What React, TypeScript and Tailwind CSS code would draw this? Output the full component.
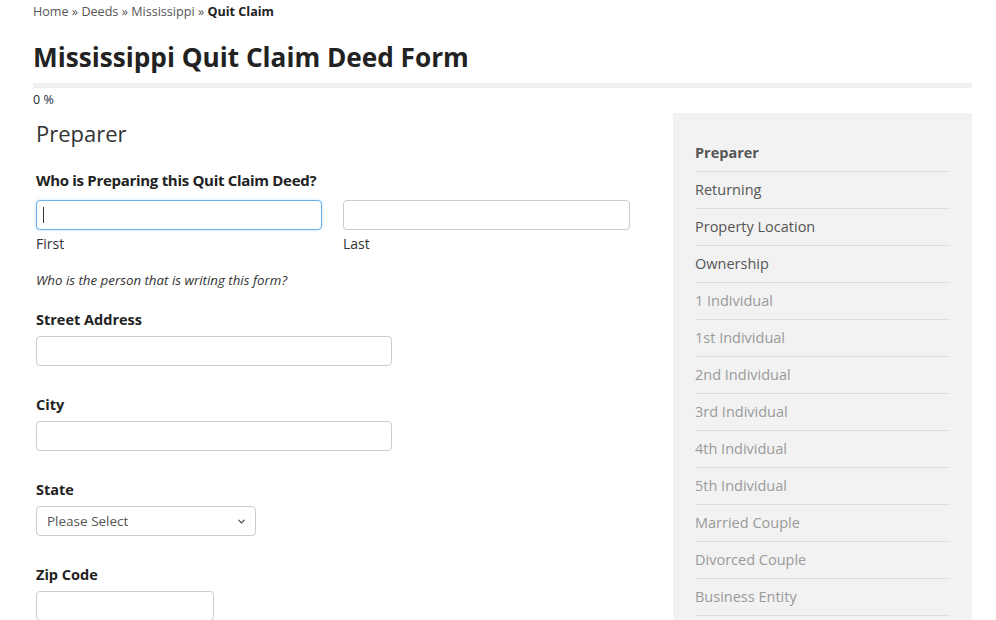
import { ChevronDown } from 'lucide-react';

const steps = [
  { label: 'Preparer', state: 'active' },
  { label: 'Returning', state: 'done' },
  { label: 'Property Location', state: 'done' },
  { label: 'Ownership', state: 'done' },
  { label: '1 Individual', state: 'off' },
  { label: '1st Individual', state: 'off' },
  { label: '2nd Individual', state: 'off' },
  { label: '3rd Individual', state: 'off' },
  { label: '4th Individual', state: 'off' },
  { label: '5th Individual', state: 'off' },
  { label: 'Married Couple', state: 'off' },
  { label: 'Divorced Couple', state: 'off' },
  { label: 'Business Entity', state: 'off' },
];

function Field({ label, width }: { label: string; width: string }) {
  return (
    <div className="mb-[29px]">
      <label className="block text-[14.5px] font-bold leading-5 text-[#222] mb-[6px]">{label}</label>
      <input
        type="text"
        className={`${width} h-[30px] border border-[#ccc] rounded-[4px] bg-white px-2 text-sm outline-none`}
      />
    </div>
  );
}

export default function App() {
  return (
    <div className="min-h-[620px] bg-white text-[#333]" style={{ fontFamily: '"Open Sans", "Liberation Sans", sans-serif' }}>
      <div className="w-[939px] ml-[33px]">
        {/* Breadcrumb */}
        <div className="pt-[3px] text-[12.6px] leading-[18px] text-[#555]">
          Home » Deeds » Mississippi » <span className="font-bold text-[#222]">Quit Claim</span>
        </div>

        <h1 className="mt-[18px] text-[26.2px] font-bold leading-[36px] text-[#222]">
          Mississippi Quit Claim Deed Form
        </h1>

        {/* Progress */}
        <div className="mt-[8px] h-[5px] w-full bg-[#f0f0f0]" />
        <div className="mt-[4px] text-[12.5px] leading-4 text-[#1d2a3a]">0 %</div>

        <div className="mt-[5px] flex">
          {/* Form column */}
          <div className="w-[640px] pl-[3px]">
            <h2 className="mt-[5px] text-[22px] leading-[30px] font-normal text-[#333]">Preparer</h2>

            <div className="mt-[22px] text-[15px] font-bold leading-5 text-[#222] tracking-[-0.3px]">
              Who is Preparing this Quit Claim Deed?
            </div>

            <div className="mt-[10px] flex gap-[21px]">
              <div className="w-[286px]">
                <div className="relative">
                  <input
                    type="text"
                    className="w-full h-[30px] border border-[#66afe9] rounded-[4px] bg-white px-2 text-sm outline-none shadow-[0_0_3px_rgba(102,175,233,0.4)]"
                  />
                  <span className="absolute left-[7px] top-[7px] h-[16px] w-px bg-[#333]" />
                </div>
                <div className="mt-[4px] text-[14px] leading-5 text-[#333]">First</div>
              </div>
              <div className="w-[287px]">
                <input
                  type="text"
                  className="w-full h-[30px] border border-[#ccc] rounded-[4px] bg-white px-2 text-sm outline-none"
                />
                <div className="mt-[4px] text-[14px] leading-5 text-[#333]">Last</div>
              </div>
            </div>

            <p className="mt-[17px] text-[13.3px] italic leading-[18px] text-[#333]">
              Who is the person that is writing this form?
            </p>

            <div className="mt-[21px]">
              <Field label="Street Address" width="w-[356px]" />
              <Field label="City" width="w-[356px]" />

              <div className="mb-[29px]">
                <label className="block text-[14.5px] font-bold leading-5 text-[#222] mb-[6px]">State</label>
                <div className="relative w-[220px]">
                  <select className="w-full h-[30px] appearance-none border border-[#ccc] rounded-[4px] bg-white pl-[10px] pr-6 text-[13.5px] text-[#555] outline-none">
                    <option>Please Select</option>
                  </select>
                  <ChevronDown size={11} strokeWidth={2.5} className="pointer-events-none absolute right-[9px] top-[10px] text-[#444]" />
                </div>
              </div>

              <Field label="Zip Code" width="w-[178px]" />
            </div>
          </div>

          {/* Steps sidebar */}
          <div className="w-[299px] ml-auto bg-[#f2f2f2] pt-[21px] px-[22px] h-[520px] overflow-hidden">
            <ul>
              {steps.map((s) => (
                <li
                  key={s.label}
                  className={`h-[37px] flex items-center border-t border-[#dedede] text-[14.5px] ${
                    s.state === 'active'
                      ? 'font-bold text-[#555] border-t-transparent'
                      : s.state === 'done'
                      ? 'text-[#555]'
                      : 'text-[#9a9a9a]'
                  }`}
                >
                  {s.label}
                </li>
              ))}
              <li className="border-t border-[#dedede]" />
            </ul>
          </div>
        </div>
      </div>
    </div>
  );
}
